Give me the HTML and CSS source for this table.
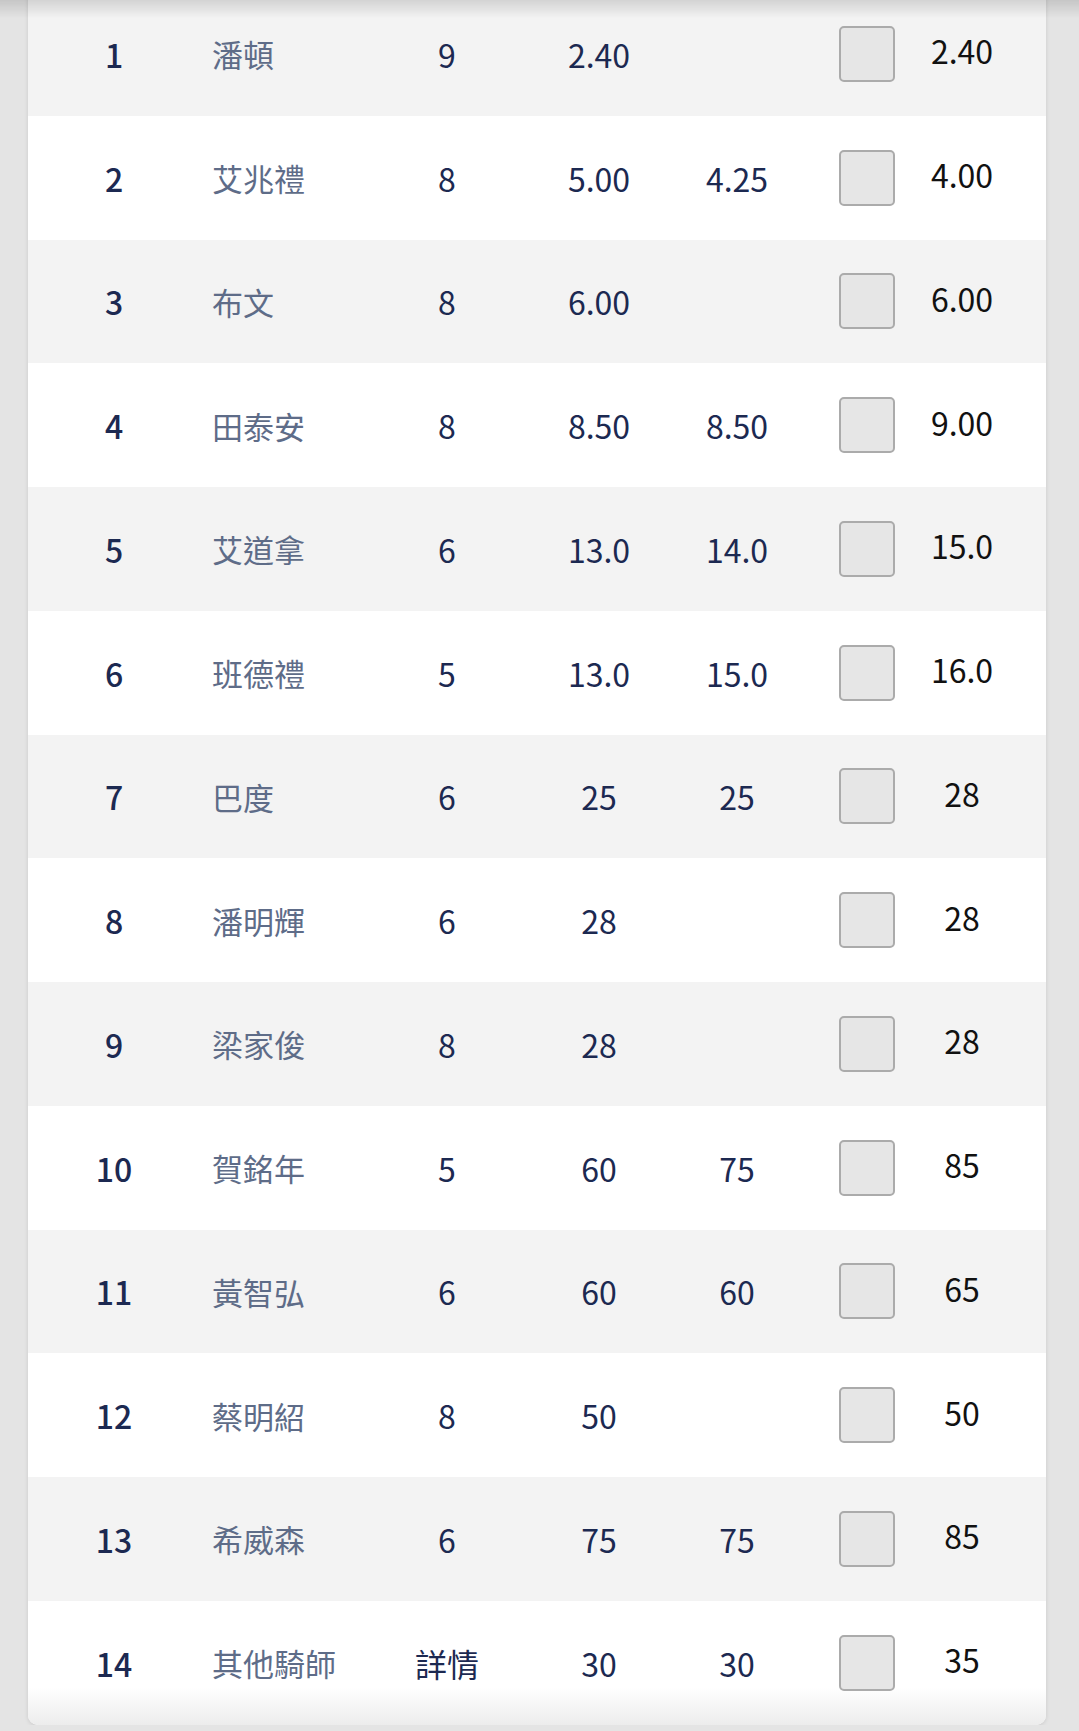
FILE: index.html
```html
<!DOCTYPE html>
<html lang="zh-Hant">

<head>
  <meta charset="UTF-8">
  <meta name="viewport" content="width=device-width, initial-scale=1.0">
  <title>騎師賠率</title>
  <link rel="stylesheet" href="styles.css">
</head>

<body>
  <div class="top-shade"></div>
  <div class="panel">
    <div class="row">
      <div class="no">1</div><div class="name">潘頓</div><div class="pts">9</div>
      <div class="odds">2.40</div><div class="odds2"></div>
      <div class="pick"><span class="box"></span></div><div class="last">2.40</div>
    </div>
    <div class="row">
      <div class="no">2</div><div class="name">艾兆禮</div><div class="pts">8</div>
      <div class="odds">5.00</div><div class="odds2">4.25</div>
      <div class="pick"><span class="box"></span></div><div class="last">4.00</div>
    </div>
    <div class="row">
      <div class="no">3</div><div class="name">布文</div><div class="pts">8</div>
      <div class="odds">6.00</div><div class="odds2"></div>
      <div class="pick"><span class="box"></span></div><div class="last">6.00</div>
    </div>
    <div class="row">
      <div class="no">4</div><div class="name">田泰安</div><div class="pts">8</div>
      <div class="odds">8.50</div><div class="odds2">8.50</div>
      <div class="pick"><span class="box"></span></div><div class="last">9.00</div>
    </div>
    <div class="row">
      <div class="no">5</div><div class="name">艾道拿</div><div class="pts">6</div>
      <div class="odds">13.0</div><div class="odds2">14.0</div>
      <div class="pick"><span class="box"></span></div><div class="last">15.0</div>
    </div>
    <div class="row">
      <div class="no">6</div><div class="name">班德禮</div><div class="pts">5</div>
      <div class="odds">13.0</div><div class="odds2">15.0</div>
      <div class="pick"><span class="box"></span></div><div class="last">16.0</div>
    </div>
    <div class="row">
      <div class="no">7</div><div class="name">巴度</div><div class="pts">6</div>
      <div class="odds">25</div><div class="odds2">25</div>
      <div class="pick"><span class="box"></span></div><div class="last">28</div>
    </div>
    <div class="row">
      <div class="no">8</div><div class="name">潘明輝</div><div class="pts">6</div>
      <div class="odds">28</div><div class="odds2"></div>
      <div class="pick"><span class="box"></span></div><div class="last">28</div>
    </div>
    <div class="row">
      <div class="no">9</div><div class="name">梁家俊</div><div class="pts">8</div>
      <div class="odds">28</div><div class="odds2"></div>
      <div class="pick"><span class="box"></span></div><div class="last">28</div>
    </div>
    <div class="row">
      <div class="no">10</div><div class="name">賀銘年</div><div class="pts">5</div>
      <div class="odds">60</div><div class="odds2">75</div>
      <div class="pick"><span class="box"></span></div><div class="last">85</div>
    </div>
    <div class="row">
      <div class="no">11</div><div class="name">黃智弘</div><div class="pts">6</div>
      <div class="odds">60</div><div class="odds2">60</div>
      <div class="pick"><span class="box"></span></div><div class="last">65</div>
    </div>
    <div class="row">
      <div class="no">12</div><div class="name">蔡明紹</div><div class="pts">8</div>
      <div class="odds">50</div><div class="odds2"></div>
      <div class="pick"><span class="box"></span></div><div class="last">50</div>
    </div>
    <div class="row">
      <div class="no">13</div><div class="name">希威森</div><div class="pts">6</div>
      <div class="odds">75</div><div class="odds2">75</div>
      <div class="pick"><span class="box"></span></div><div class="last">85</div>
    </div>
    <div class="row">
      <div class="no">14</div><div class="name">其他騎師</div><div class="pts">詳情</div>
      <div class="odds">30</div><div class="odds2">30</div>
      <div class="pick"><span class="box"></span></div><div class="last">35</div>
    </div>
  </div>
</body>

</html>
```

FILE: styles.css
```css
body {
  margin: 0;
  background-color: #e4e4e4;
  font-family: 'Noto Sans CJK TC', 'Noto Sans', sans-serif;
  font-size: 32px;
  color: #1c2951;
  overflow: hidden;
}

.top-shade {
  position: fixed;
  top: 0;
  left: 0;
  right: 0;
  height: 18px;
  background: linear-gradient(to bottom, rgba(0, 0, 0, 0.13), rgba(0, 0, 0, 0));
  z-index: 2;
}

.panel {
  margin: -8px 33px 0 28px;
  background-color: #fff;
  border-radius: 0 0 10px 10px;
  box-shadow: 0 1px 4px rgba(0, 0, 0, 0.12);
  overflow: hidden;
}

.row {
  display: flex;
  align-items: center;
  height: 123.75px;
  background-color: #fff;
}

.row:nth-child(odd) {
  background-color: #f3f3f3;
}

.row:last-child {
  background: linear-gradient(to bottom, #fff 70%, #ececec);
}

.no {
  width: 172px;
  text-align: center;
  font-weight: 500;
}

.name {
  width: 175px;
  padding-left: 12px;
  font-size: 31px;
  color: #5e6c88;
}

.pts {
  width: 120px;
  text-align: center;
}

.odds {
  width: 184px;
  text-align: center;
}

.odds2 {
  width: 92px;
  text-align: center;
}

.pick {
  margin-left: 56px;
  width: 56px;
  display: flex;
}

.box {
  display: block;
  width: 56px;
  height: 56px;
  box-sizing: border-box;
  border: 2px solid #ababab;
  border-radius: 5px;
  background-color: #e6e6e6;
}

.last {
  margin-left: 7px;
  width: 120px;
  text-align: center;
  color: #111;
  margin-bottom: 7px;
}
```
